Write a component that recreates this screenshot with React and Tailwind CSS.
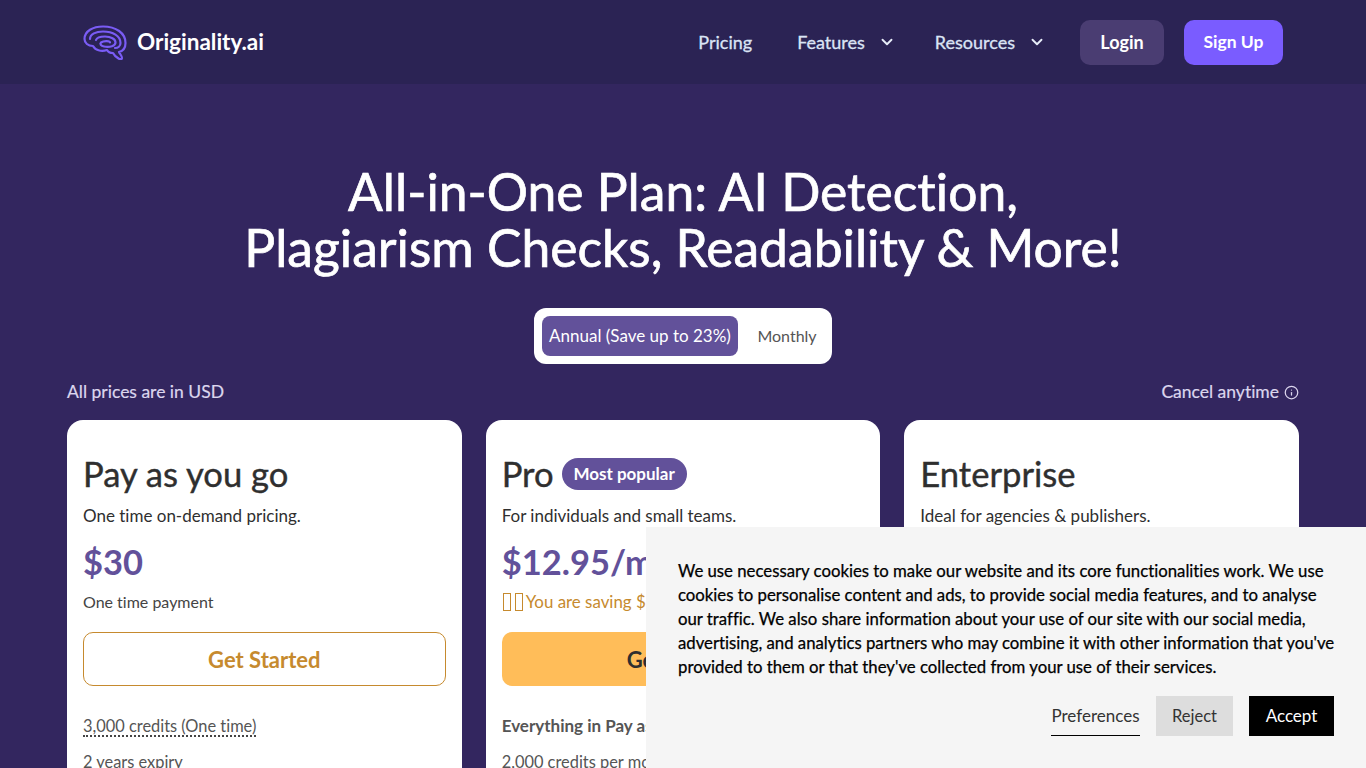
import { ChevronDown, Info } from "lucide-react";

function Logo() {
  return (
    <svg width="44" height="35" viewBox="0 0 44 35" fill="none" stroke="#7a5cf5" strokeWidth="2.2" strokeLinecap="round" strokeLinejoin="round">
      <path d="M1.5 14C1.5 6 10 1.5 20 1.5C33 1.5 42.5 8 42.5 18C42.5 23 40 26 36 27C37 29 39 31 39 33C39 34.5 37 34.5 35.5 33.5C33 32 31 30 30 28C27 28 25 27 24 25C18 27 12 25 10 21C5 21 1.5 18 1.5 14Z" />
      <path d="M7 14C7 9 13 6.5 20 6.5C30 6.5 37.5 11 37.5 18C37.5 21 35 23 32 23" />
      <path d="M13 15C14 12 18 11.5 22 11.5C28 11.5 32.5 14 32.5 17.5C32.5 21 27 22.5 21 21.5C18 21 16.5 19 18 17.5C21 15.5 27 16 27 17.5" />
    </svg>
  );
}

function NavLink({ label, arrow }) {
  return (
    <div className="flex items-center text-[18px] text-[#dbe4f5] [-webkit-text-stroke:0.3px_#dbe4f5]">
      <span>{label}</span>
      {arrow ? <ChevronDown size={18} strokeWidth={2.5} className="ml-[13px] text-[#e6ecf8]" /> : null}
    </div>
  );
}

function Card({ children }) {
  return <div className="h-[500px] rounded-2xl bg-white px-4 pt-[33px] text-[#2f2f2f]">{children}</div>;
}

export default function App() {
  return (
    <div className="relative h-screen overflow-hidden bg-[#33265f] font-['Lato',sans-serif] [font-variant-ligatures:none]">
      <header className="flex h-[84px] items-center justify-between bg-[#2b2354] px-[83px]">
        <div className="flex items-center gap-[10px]">
          <Logo />
          <span className="text-[22.5px] font-bold text-white">Originality.ai</span>
        </div>
        <div className="flex items-center">
          <NavLink label="Pricing" />
          <div className="ml-[45px]"><NavLink label="Features" arrow /></div>
          <div className="ml-[39px]"><NavLink label="Resources" arrow /></div>
          <button className="ml-[34px] h-[45px] w-[84px] rounded-[10px] bg-[#4a3d72] text-[18px] font-bold text-white">Login</button>
          <button className="ml-[20px] h-[45px] w-[99px] rounded-[10px] bg-[#7a5cff] text-[17.5px] font-bold text-white">Sign Up</button>
        </div>
      </header>

      <main className="px-[67px] pt-[79px]">
        <h1 className="text-center text-[51.6px] leading-[56px] text-white [-webkit-text-stroke:0.7px_white]">
          All-in-One Plan: AI Detection,
          <br />
          Plagiarism Checks, Readability &amp; More!
        </h1>

        <div className="mt-[33px] flex justify-center">
          <div className="flex h-14 w-[298px] items-center rounded-xl bg-white p-2">
            <div className="flex h-10 w-[196px] items-center justify-center rounded-lg bg-[#62519a] text-[17px] text-white">Annual (Save up to 23%)</div>
            <div className="flex-1 pl-3 text-center text-[16px] text-[#555]">Monthly</div>
          </div>
        </div>

        <div className="mt-[16px] flex h-[24px] items-center justify-between text-[17.5px] text-[#dcd6ee] [-webkit-text-stroke:0.2px_#dcd6ee]">
          <span>All prices are in USD</span>
          <span className="flex items-center gap-[5px]">
            Cancel anytime
            <Info size={15} />
          </span>
        </div>

        <div className="mt-[16px] grid grid-cols-3 gap-6">
          <Card>
            <h2 className="flex h-[42px] items-center text-[34.6px] [-webkit-text-stroke:0.4px_#2f2f2f]">Pay as you go</h2>
            <p className="mt-[9px] h-6 text-[17px] leading-6">One time on-demand pricing.</p>
            <div className="mt-[12px] h-[44px] text-[34.5px] font-bold leading-[44px] text-[#62519a]">$30</div>
            <p className="mt-[6px] h-6 text-[16px] leading-6 text-[#444]">One time payment</p>
            <button className="mt-[18px] h-[54px] w-full rounded-[10px] border border-[#c68a2e] text-[22px] font-bold text-[#c68a2e]">Get Started</button>
            <div className="mt-[28px] text-[16.4px] leading-6 text-[#555]">
              <span className="border-b-2 border-dotted border-[#444]">3,000 credits (One time)</span>
            </div>
            <p className="mt-[12px] text-[16.4px] leading-6 text-[#555]">2 years expiry</p>
          </Card>

          <Card>
            <div className="flex h-[42px] items-center gap-2">
              <h2 className="text-[34.6px] [-webkit-text-stroke:0.4px_#2f2f2f]">Pro</h2>
              <span className="flex h-8 w-[125px] items-center justify-center rounded-full bg-[#62519a] text-[17px] font-bold text-white">Most popular</span>
            </div>
            <p className="mt-[9px] h-6 text-[17px] leading-6">For individuals and small teams.</p>
            <div className="mt-[12px] h-[44px] whitespace-nowrap text-[34.5px] font-bold leading-[44px] text-[#62519a]">$12.95/mo</div>
            <p className="mt-[6px] flex h-6 items-center text-[16.9px] text-[#c68a2e]">
              <span className="ml-px h-[18px] w-[8px] border border-[#c68a2e]" />
              <span className="ml-1 h-[18px] w-[8px] border border-[#c68a2e]" />
              <span className="ml-[3px] whitespace-nowrap">You are saving $</span>
            </p>
            <button className="mt-[18px] h-[54px] w-full rounded-[10px] bg-[#ffbd59] text-[22px] font-bold text-[#2f2f2f]">Get Started</button>
            <p className="mt-[28px] whitespace-nowrap text-[17px] font-bold leading-6 text-[#555]">Everything in Pay as you go</p>
            <p className="mt-[12px] whitespace-nowrap text-[16.4px] leading-6 text-[#555]">2,000 credits per month</p>
          </Card>

          <Card>
            <h2 className="flex h-[42px] items-center text-[34.6px] [-webkit-text-stroke:0.4px_#2f2f2f]">Enterprise</h2>
            <p className="mt-[9px] h-6 text-[17px] leading-6">Ideal for agencies &amp; publishers.</p>
          </Card>
        </div>
      </main>

      <div className="absolute bottom-0 right-0 h-[241px] w-[720px] bg-[#f5f5f5] pl-8 pr-[26px] pt-8 text-black">
        <p className="text-[16.75px] leading-6 [-webkit-text-stroke:0.25px_black]">
          We use necessary cookies to make our website and its core functionalities work. We use cookies to personalise content and ads, to provide social media features, and to analyse our traffic. We also share information about your use of our site with our social media, advertising, and analytics partners who may combine it with other information that you've provided to them or that they've collected from your use of their services.
        </p>
        <div className="mt-[17px] flex items-center justify-end gap-4 pr-[6px]">
          <button className="h-10 w-[89px] border-b border-black text-[17px] text-[#333]">Preferences</button>
          <button className="h-10 w-[77px] bg-[#dddddd] text-[16.5px] text-[#333]">Reject</button>
          <button className="h-10 w-[85px] bg-black text-[17px] text-white">Accept</button>
        </div>
      </div>
    </div>
  );
}
